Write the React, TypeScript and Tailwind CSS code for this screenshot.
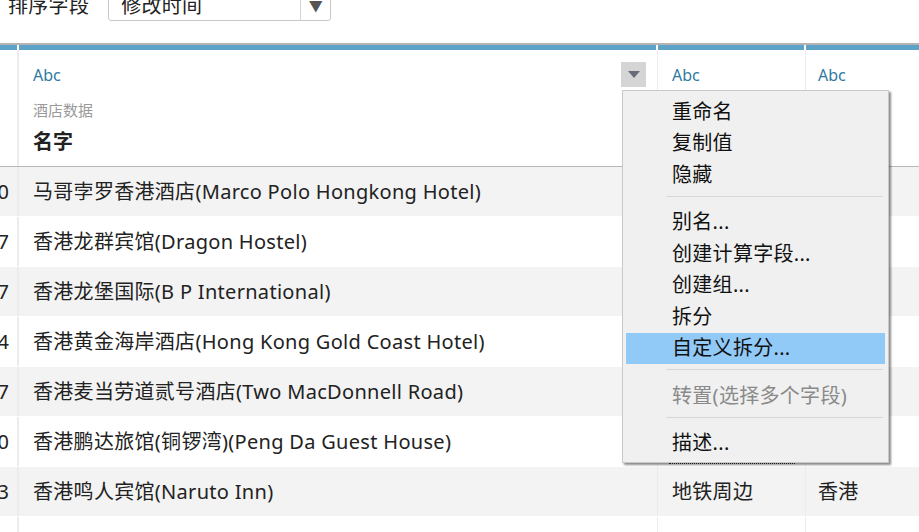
import React from "react";

const font = { fontFamily: '"Noto Sans", "Noto Sans CJK SC", sans-serif' };

const rows = [
  { n: "10", name: "马哥孛罗香港酒店(Marco Polo Hongkong Hotel)", area: "尖沙咀", city: "香港" },
  { n: "17", name: "香港龙群宾馆(Dragon Hostel)", area: "旺角", city: "香港" },
  { n: "17", name: "香港龙堡国际(B P International)", area: "尖沙咀", city: "香港" },
  { n: "14", name: "香港黄金海岸酒店(Hong Kong Gold Coast Hotel)", area: "屯门", city: "香港" },
  { n: "17", name: "香港麦当劳道贰号酒店(Two MacDonnell Road)", area: "中环", city: "香港" },
  { n: "10", name: "香港鹏达旅馆(铜锣湾)(Peng Da Guest House)", area: "铜锣湾", city: "香港" },
  { n: "13", name: "香港鸣人宾馆(Naruto Inn)", area: "地铁周边", city: "香港" },
  { n: "12", name: "", area: "", city: "" },
];

type Item = { label: string; sep?: boolean; active?: boolean; disabled?: boolean };
const menu: Item[] = [
  { label: "重命名" },
  { label: "复制值" },
  { label: "隐藏" },
  { label: "", sep: true },
  { label: "别名..." },
  { label: "创建计算字段..." },
  { label: "创建组..." },
  { label: "拆分" },
  { label: "自定义拆分...", active: true },
  { label: "", sep: true },
  { label: "转置(选择多个字段)", disabled: true },
  { label: "", sep: true },
  { label: "描述..." },
];

export default function App() {
  return (
    <div className="relative w-[919px] h-[532px] overflow-hidden bg-white text-[#222]" style={font}>
      {/* sort bar */}
      <div className="h-[43px] flex items-start">
        <div className="flex items-center -mt-[10px]">
          <span className="pl-[8px] pr-[19px] text-[20px] leading-[30px] tracking-[0.3px]">排序字段</span>
          <div className="w-[223px] h-[31px] flex items-stretch border border-[#c8c8c8] rounded-[3px] bg-white">
            <span className="flex-1 pl-[12px] text-[20px] leading-[30px] tracking-[0.3px]">修改时间</span>
            <span className="w-[30px] border-l border-[#d6d6d6] flex items-center justify-center text-[#555] text-[14px]">▼</span>
          </div>
        </div>
      </div>
      <div className="h-[2px] bg-[#b4b4b4]" />
      {/* blue header bar */}
      <div className="flex h-[5px]">
        <div className="w-[17px] bg-[#5da3c8]" />
        <div className="w-[2px] bg-white" />
        <div className="w-[637px] bg-[#5da3c8]" />
        <div className="w-[2px] bg-white" />
        <div className="w-[146px] bg-[#5da3c8]" />
        <div className="w-[2px] bg-white" />
        <div className="flex-1 bg-[#5da3c8]" />
      </div>
      {/* header */}
      <div className="flex h-[117px] border-b border-[#b8b8b8]">
        <div className="w-[19px] border-r-2 border-[#ececec]" />
        <div className="w-[639px] relative pl-[14px] pt-[15px] border-r border-[#ececec]">
          <div className="text-[16px] leading-[20px] text-[#2e7aa0]">Abc</div>
          <div className="mt-[15px] text-[15px] leading-[20px] text-[#9a9a9a]">酒店数据</div>
          <div className="mt-[9px] text-[20px] leading-[26px] font-bold text-[#222]">名字</div>
          <div className="absolute left-[602px] top-[12px] w-[25px] h-[25px] bg-[#d5d5d5] flex items-center justify-center">
            <svg width="12" height="7" viewBox="0 0 12 7">
              <path d="M0 0 L12 0 L6 7 Z" fill="#666d78" />
            </svg>
          </div>
        </div>
        <div className="w-[148px] pl-[14px] pt-[15px] border-r border-[#ececec]">
          <div className="text-[16px] leading-[20px] text-[#2e7aa0]">Abc</div>
        </div>
        <div className="flex-1 pl-[12px] pt-[15px]">
          <div className="text-[16px] leading-[20px] text-[#2e7aa0]">Abc</div>
        </div>
      </div>
      {/* rows */}
      {rows.map((r, i) => (
        <div key={i} className={`flex h-[50px] border-b border-white ${i % 2 === 0 ? "bg-[#f3f3f3]" : "bg-white"}`}>
          <div className="w-[19px] overflow-hidden border-r-2 border-[#ececec] flex items-center justify-end">
            <span className="text-[20px] pr-[8px] whitespace-nowrap">{r.n}</span>
          </div>
          <div className="w-[639px] pl-[14px] flex items-center text-[20px] tracking-[0.3px] whitespace-nowrap border-r border-[#ececec]">{r.name}</div>
          <div className="w-[148px] pl-[14px] flex items-center text-[20px] tracking-[0.3px] whitespace-nowrap border-r border-[#ececec]">{r.area}</div>
          <div className="flex-1 pl-[12px] flex items-center text-[20px] tracking-[0.3px] whitespace-nowrap">{r.city}</div>
        </div>
      ))}
      {/* focus rect remnant */}
      <div className="absolute left-[669px] top-[463px] w-[126px] h-0 border-t border-dotted border-[#333]" />
      {/* context menu */}
      <div className="absolute left-[622px] top-[90px] w-[267px] bg-[#f0f0f0] border border-[#c9c9c9] shadow-[2px_2px_2px_rgba(0,0,0,0.45)] pt-[5px] pb-[3px] px-[3px]">
        {menu.map((m, i) =>
          m.sep ? (
            <div key={i} className="pt-[5px] pb-[10px] pl-[40px] pr-[2px]">
              <div className="h-px w-full bg-[#d7d7d7]" />
            </div>
          ) : (
            <div
              key={i}
              className={`h-[31.5px] pl-[46px] flex items-center text-[20px] tracking-[0.3px] whitespace-nowrap ${m.active ? "bg-[#91c9f7]" : ""} ${m.disabled ? "text-[#8a8a8a]" : "text-[#111]"}`}
            >
              {m.label}
            </div>
          )
        )}
      </div>
    </div>
  );
}
